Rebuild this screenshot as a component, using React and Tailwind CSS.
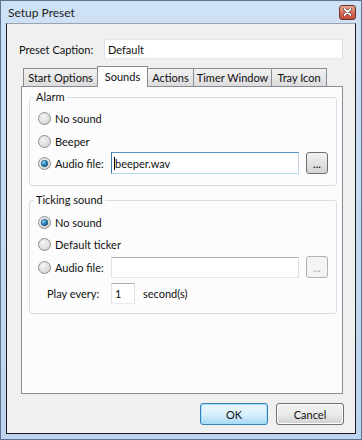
import React from 'react';

const Radio = ({ checked }) => (
  <svg width="13" height="13" viewBox="0 0 13 13" className="shrink-0">
    <defs>
      <radialGradient id="rb" cx="0.4" cy="0.35" r="0.7">
        <stop offset="0" stopColor="#f6f6f6" />
        <stop offset="1" stopColor="#d2d2d2" />
      </radialGradient>
      <radialGradient id="rd" cx="0.35" cy="0.3" r="0.8">
        <stop offset="0" stopColor="#8fd3f5" />
        <stop offset="0.5" stopColor="#2a8ac0" />
        <stop offset="1" stopColor="#0d4a74" />
      </radialGradient>
    </defs>
    <circle cx="6.5" cy="6.5" r="6" fill="url(#rb)" stroke="#8e8f8f" />
    {checked && <circle cx="6.5" cy="6.5" r="3.3" fill="url(#rd)" stroke="#1d4f73" strokeWidth="0.6" />}
  </svg>
);

const RadioRow = ({ checked, label, className = '', children }) => (
  <div className={`flex items-center ${className}`}>
    <div className="flex items-center gap-[4px] w-[73px]">
      <Radio checked={checked} />
      <span className="whitespace-nowrap">{label}</span>
    </div>
    {children}
  </div>
);

const Browse = ({ disabled }) => (
  <div
    className={`ml-[7px] w-[22px] h-[22px] rounded-[3px] border flex items-center justify-center ${
      disabled
        ? 'border-[#adb2b5] bg-[#f4f4f4] text-[#a0a0a0]'
        : 'border-[#707070] bg-gradient-to-b from-[#f2f2f2] to-[#d4d4d4] text-black'
    }`}
  >
    <span className="leading-none mt-[1px]">...</span>
  </div>
);

const GroupBox = ({ title, className = '', children }) => (
  <div className={`relative border border-[#d5dfe5] rounded-[3px] ${className}`}>
    <span className="absolute -top-[8px] left-[4px] px-[2px] bg-[#fcfcfc] leading-[14px] whitespace-nowrap">{title}</span>
    {children}
  </div>
);

const tabs = [
  { label: 'Start Options', w: 'w-[75px]' },
  { label: 'Sounds', w: 'w-[51px]', active: true },
  { label: 'Actions', w: 'w-[47px]' },
  { label: 'Timer Window', w: 'w-[79px]' },
  { label: 'Tray Icon', w: 'w-[56px]' },
];

export default function App() {
  return (
    <div
      className="w-[362px] h-[440px] border border-[#5d7391] bg-gradient-to-b from-[#cfe1f5] to-[#bcd4ef] flex flex-col px-[5px] pb-[5px] text-[11px] leading-[15px] text-[#111]"
      style={{ fontFamily: 'Lato, "Noto Sans", sans-serif' }}
    >
      {/* Title bar */}
      <div className="h-[22px] flex items-center justify-between shrink-0">
        <span className="pl-[2px] text-[12px] text-[#1e1e1e] whitespace-nowrap">Setup Preset</span>
        <div className="w-[17px] h-[15px] rounded-[3px] border border-[#6e3127] bg-gradient-to-b from-[#eaa99a] via-[#d6705c] to-[#c24a35] flex items-center justify-center">
          <svg width="9" height="8" viewBox="0 0 9 8">
            <path d="M1.5 1 L7.5 7 M7.5 1 L1.5 7" stroke="#4a1e18" strokeWidth="3" strokeLinecap="round" />
            <path d="M1.5 1 L7.5 7 M7.5 1 L1.5 7" stroke="#ffffff" strokeWidth="1.8" strokeLinecap="round" />
          </svg>
        </div>
      </div>

      {/* Client area */}
      <div className="flex-1 flex flex-col bg-[#f0f0f0] border border-[#1a1a1a] border-t-[#9aa4b0]">
        {/* Caption */}
        <div className="flex items-center mt-[15px] ml-[12px]">
          <span className="w-[85px] whitespace-nowrap">Preset Caption:</span>
          <div className="w-[239px] h-[20px] bg-white border border-[#abadb3] border-t-[#e3e9ef] border-l-[#e2e3ea] border-r-[#dbdfe6] border-b-[#e3e9ef] flex items-center pl-[3px]">
            Default
          </div>
        </div>

        {/* Tabs */}
        <div className="ml-[14px] mt-[7px] flex flex-col w-[322px]">
          <div className="flex items-end h-[21px] pl-[2px] relative z-10 -mb-px">
            {tabs.map((t) =>
              t.active ? (
                <div
                  key={t.label}
                  className={`${t.w} h-[21px] -mr-px bg-[#fcfcfc] border border-[#898c95] border-b-0 flex items-start justify-center pt-[2px] whitespace-nowrap`}
                >
                  {t.label}
                </div>
              ) : (
                <div
                  key={t.label}
                  className={`${t.w} h-[19px] -mr-px bg-gradient-to-b from-[#f2f2f2] to-[#dcdcdc] border border-[#898c95] flex items-center justify-center whitespace-nowrap`}
                >
                  {t.label}
                </div>
              )
            )}
          </div>

          {/* Panel */}
          <div className="h-[308px] bg-[#fcfcfc] border border-[#898c95] flex flex-col pl-[7px] pr-[5px] pt-[10px]">
            <GroupBox title="Alarm" className="h-[89px]">
              <div className="flex flex-col pl-[8px] pt-[9px]">
                <RadioRow label="No sound" className="h-[22px]" />
                <RadioRow label="Beeper" className="h-[22px] mt-[1px]" />
                <RadioRow checked label="Audio file:" className="h-[22px]">
                  <div className="w-[188px] h-[22px] bg-white border border-[#3d7bad] border-t-[#5794bf] border-b-[#b7d9ed] border-r-[#c3d3e4] flex items-center pl-[2px]">
                    <span className="w-px h-[13px] bg-black" />
                    <span>beeper.wav</span>
                  </div>
                  <Browse />
                </RadioRow>
              </div>
            </GroupBox>

            <GroupBox title="Ticking sound" className="h-[114px] mt-[14px]">
              <div className="flex flex-col pl-[8px] pt-[10px]">
                <RadioRow checked label="No sound" className="h-[22px]" />
                <RadioRow label="Default ticker" className="h-[22px]" />
                <RadioRow label="Audio file:" className="h-[22px] mt-[1px]">
                  <div className="w-[188px] h-[21px] bg-white border border-[#abadb3] border-l-[#e2e3ea] border-r-[#dbdfe6] border-b-[#e3e9ef]" />
                  <Browse disabled />
                </RadioRow>
                <div className="flex items-center h-[22px] mt-[4px]">
                  <span className="w-[73px] pl-[9px] whitespace-nowrap">Play every:</span>
                  <div className="w-[24px] h-[21px] bg-white border border-[#abadb3] border-l-[#e2e3ea] border-r-[#dbdfe6] border-b-[#e3e9ef] flex items-center pl-[3px]">
                    1
                  </div>
                  <span className="ml-[8px] whitespace-nowrap">second(s)</span>
                </div>
              </div>
            </GroupBox>
          </div>
        </div>

        {/* Buttons */}
        <div className="flex justify-end gap-[8px] mt-[9px] mr-[11px]">
          <div className="w-[68px] h-[22px] rounded-[3px] border border-[#3c7fb1] bg-gradient-to-b from-[#eaf6fd] via-[#d9f0fc] to-[#a7d9f5] shadow-[inset_0_0_0_1px_#9fe1fb] flex items-center justify-center">
            OK
          </div>
          <div className="w-[68px] h-[22px] rounded-[3px] border border-[#707070] bg-gradient-to-b from-[#f2f2f2] via-[#ebebeb] to-[#cfcfcf] shadow-[inset_0_0_0_1px_#fcfcfc] flex items-center justify-center">
            Cancel
          </div>
        </div>
      </div>
    </div>
  );
}
